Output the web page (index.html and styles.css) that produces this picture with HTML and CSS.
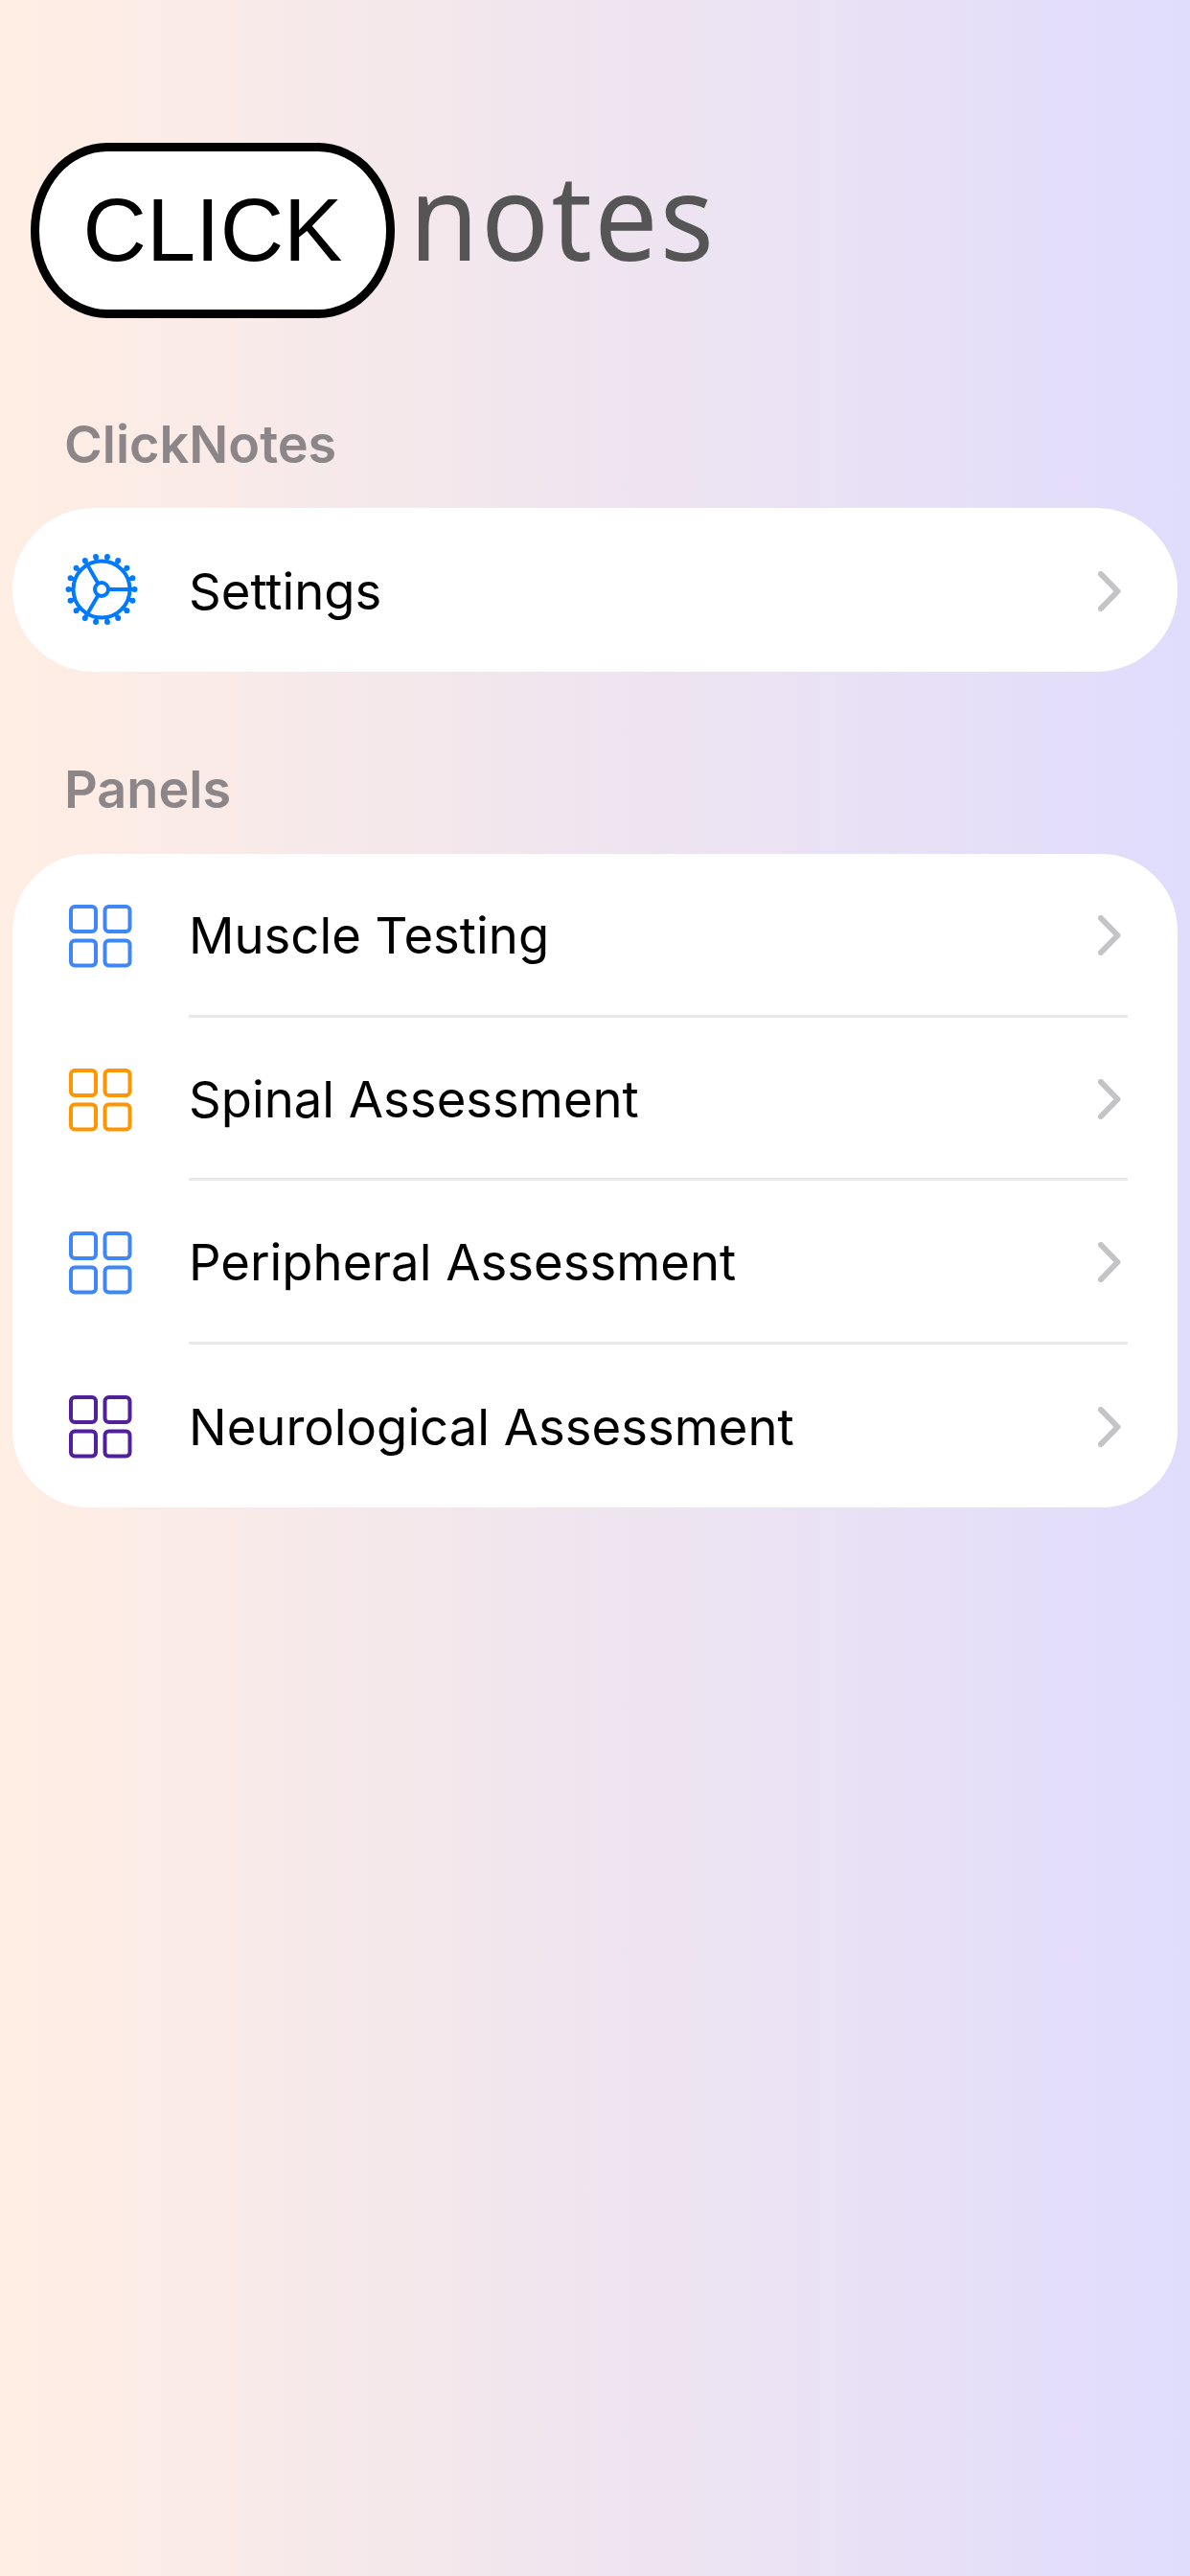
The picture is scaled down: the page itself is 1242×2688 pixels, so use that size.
FILE: index.html
```html
<!DOCTYPE html>
<html>
<head>
  <meta charset="utf-8">
  <title>ClickNotes</title>
  <link rel="stylesheet" href="styles.css">
</head>
<body>
  <svg class="defs" width="0" height="0">
    <symbol id="grid" viewBox="0 0 66 66">
      <rect x="2" y="2" width="26" height="26" rx="4"/>
      <rect x="37.500" y="2" width="26" height="26" rx="4"/>
      <rect x="2" y="37.500" width="26" height="26" rx="4"/>
      <rect x="37.500" y="37.500" width="26" height="26" rx="4"/>
    </symbol>
    <symbol id="chevron" viewBox="0 0 24 42">
      <path d="M3 3 L20.500 21 L3 39"/>
    </symbol>
  </svg>

  <div class="logo">
    <div class="logo-pill">CLICK</div>
    <div class="logo-notes">notes</div>
  </div>

  <h2 class="section-title">ClickNotes</h2>
  <div class="card single">
    <div class="row">
      <svg class="row-icon gear" viewBox="-40 -40 80 80">
        <circle class="gear-base" r="32.500" pathLength="18"/>
        <circle class="gear-teeth" r="34.500" pathLength="18"/>
        <circle class="gear-line" r="29.500"/>
        <circle class="gear-line" r="7"/>
        <path class="gear-line" d="M7 0 H29.500 M-3.500 6.060 L-14.750 25.550 M-3.500 -6.060 L-14.750 -25.550"/>
      </svg>
      <div class="row-body">
        <span>Settings</span>
        <svg class="chevron"><use href="#chevron"/></svg>
      </div>
    </div>
  </div>

  <h2 class="section-title panels">Panels</h2>
  <div class="card">
    <div class="row">
      <svg class="row-icon grid blue"><use href="#grid"/></svg>
      <div class="row-body divided">
        <span>Muscle Testing</span>
        <svg class="chevron"><use href="#chevron"/></svg>
      </div>
    </div>
    <div class="row">
      <svg class="row-icon grid orange"><use href="#grid"/></svg>
      <div class="row-body divided">
        <span>Spinal Assessment</span>
        <svg class="chevron"><use href="#chevron"/></svg>
      </div>
    </div>
    <div class="row">
      <svg class="row-icon grid blue"><use href="#grid"/></svg>
      <div class="row-body divided">
        <span>Peripheral Assessment</span>
        <svg class="chevron"><use href="#chevron"/></svg>
      </div>
    </div>
    <div class="row">
      <svg class="row-icon grid purple"><use href="#grid"/></svg>
      <div class="row-body">
        <span>Neurological Assessment</span>
        <svg class="chevron"><use href="#chevron"/></svg>
      </div>
    </div>
  </div>
</body>
</html>
```

FILE: styles.css
```css
html, body {
  height: 100%;
}

body {
  margin: 0;
  padding: 149px 13px 0;
  box-sizing: border-box;
  background: linear-gradient(90deg, #ffeee3 0%, #e0dcfc 100%);
  font-family: Inter, "Liberation Sans", sans-serif;
  color: #000;
}

.defs {
  position: absolute;
}

.logo {
  display: flex;
  align-items: baseline;
  gap: 15px;
  margin-left: 19px;
}

.logo-pill {
  width: 380px;
  height: 183px;
  box-sizing: border-box;
  display: flex;
  align-items: center;
  justify-content: center;
  background: #fff;
  border: 9px solid #000;
  border-radius: 80px / 91px;
  font-family: "Liberation Sans", sans-serif;
  font-size: 92px;
}

.logo-notes {
  font-family: "Noto Sans", sans-serif;
  font-size: 125px;
  letter-spacing: 2.5px;
  line-height: 1;
  color: #555;
  transform: scaleX(0.94);
  transform-origin: left;
}

.section-title {
  margin: 102px 0 36px 54px;
  font-size: 54px;
  font-weight: 600;
  line-height: 60px;
  color: #8c8689;
}

.section-title.panels {
  margin-top: 93.5px;
  margin-bottom: 37px;
}

.card {
  background: #fff;
  border-radius: 80px;
  overflow: hidden;
}

.card.single {
  border-radius: 85px;
}

.row {
  display: flex;
  align-items: center;
  height: 170.5px;
  padding-left: 59px;
  padding-right: 52px;
}

.row-icon {
  flex: none;
  fill: none;
}

.row-icon.gear {
  width: 80px;
  height: 80px;
  margin-left: -6px;
  margin-right: 51px;
}

.gear-base {
  stroke: #007aff;
  stroke-width: 3;
  stroke-dasharray: 0.36 0.64;
  stroke-dashoffset: 0.18;
}

.gear-teeth {
  stroke: #007aff;
  stroke-width: 6;
  stroke-linecap: round;
  stroke-dasharray: 0 1;
}

.gear-line {
  fill: none;
  stroke: #007aff;
  stroke-width: 4;
}

.row-icon.grid {
  width: 66px;
  height: 66px;
  margin-top: 2px;
  margin-right: 59px;
  stroke-width: 4;
}

.blue {
  stroke: #3f86f6;
}

.orange {
  stroke: #ff9500;
}

.purple {
  stroke: #52209a;
}

.row-body {
  flex: 1;
  height: 100%;
  padding-top: 3px;
  box-sizing: border-box;
  display: flex;
  align-items: center;
  justify-content: space-between;
  font-size: 52.6px;
  line-height: 60px;
}

.row-body.divided {
  border-bottom: 3px solid #e8e8ea;
}

.chevron {
  flex: none;
  width: 24px;
  height: 42px;
  margin-right: 7px;
  fill: none;
  stroke: #c4c4c6;
  stroke-width: 6;
  stroke-linecap: round;
  stroke-linejoin: round;
}
```
